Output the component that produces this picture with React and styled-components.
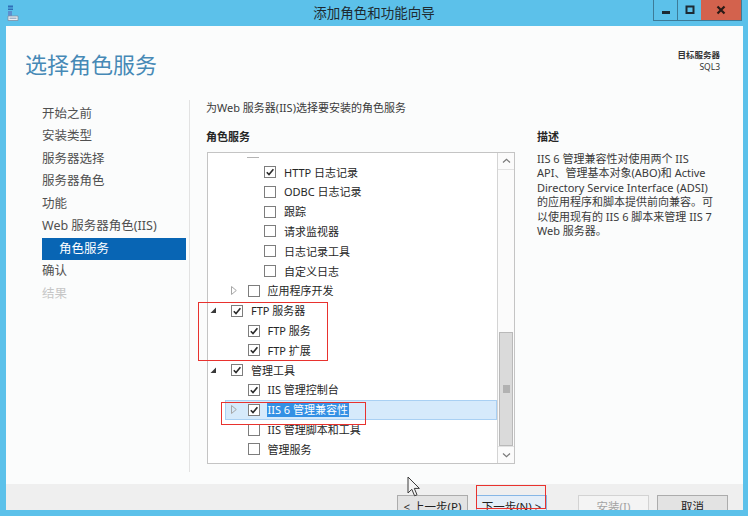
import React from 'react';
import styled, { createGlobalStyle } from 'styled-components';

const GlobalStyle = createGlobalStyle`
  html, body {
    margin: 0;
    padding: 0;
  }
  body {
    width: 748px;
    height: 516px;
    overflow: hidden;
    font-family: "Noto Sans", "Noto Sans CJK SC", sans-serif;
    color: #333;
  }
`;

const NAV = [
  { label: '开始之前' },
  { label: '安装类型' },
  { label: '服务器选择' },
  { label: '服务器角色' },
  { label: '功能' },
  { label: 'Web 服务器角色(IIS)' },
  { label: '角色服务', active: true },
  { label: '确认' },
  { label: '结果', disabled: true },
];

// expander: 'open' | 'closed' | undefined
const TREE = [
  { level: 3, checked: true, label: 'HTTP 日志记录' },
  { level: 3, label: 'ODBC 日志记录' },
  { level: 3, label: '跟踪' },
  { level: 3, label: '请求监视器' },
  { level: 3, label: '日志记录工具' },
  { level: 3, label: '自定义日志' },
  { level: 2, expander: 'closed', label: '应用程序开发' },
  { level: 1, expander: 'open', checked: true, label: 'FTP 服务器' },
  { level: 2, checked: true, label: 'FTP 服务' },
  { level: 2, checked: true, label: 'FTP 扩展' },
  { level: 1, expander: 'open', checked: true, label: '管理工具' },
  { level: 2, checked: true, label: 'IIS 管理控制台' },
  { level: 2, expander: 'closed', checked: true, selected: true, label: 'IIS 6 管理兼容性' },
  { level: 2, label: 'IIS 管理脚本和工具' },
  { level: 2, label: '管理服务' },
];

const App = () => {
  return (
    <>
      <GlobalStyle />
      <Window>
        <TitleBar>
          <AppIcon viewBox="0 0 12 17">
            <rect x="1" y="0.5" width="5" height="2" fill="#2f6fb8" />
            <rect x="1" y="3.5" width="5" height="1.5" fill="#2f6fb8" />
            <rect x="1" y="6" width="4" height="5" fill="#5b8fd0" />
            <path d="M1 11 L11 11 L11 15.5 L1 15.5 Z" fill="#e8eef4" stroke="#7c8fa4" strokeWidth="0.8" />
            <rect x="2.5" y="12.5" width="7" height="1.5" fill="#9fb3c8" />
          </AppIcon>
          <Title>添加角色和功能向导</Title>
          <Controls>
            <CtrlButton>
              <svg width="10" height="10" viewBox="0 0 10 10">
                <rect x="1" y="6" width="8" height="3" fill="#1c2a33" />
              </svg>
            </CtrlButton>
            <CtrlButton>
              <svg width="10" height="10" viewBox="0 0 10 10">
                <rect x="1.5" y="1.5" width="7" height="6.5" fill="none" stroke="#1c2a33" strokeWidth="2" />
              </svg>
            </CtrlButton>
            <CtrlButton $close>
              <svg width="10" height="10" viewBox="0 0 10 10">
                <path d="M1.5 1.5 L8.5 8.5 M8.5 1.5 L1.5 8.5" stroke="#2a1a16" strokeWidth="2.2" />
              </svg>
            </CtrlButton>
          </Controls>
        </TitleBar>

        <Client>
          <Header>
            <PageTitle>选择角色服务</PageTitle>
            <Target>
              <TargetLabel>目标服务器</TargetLabel>
              <TargetName>SQL3</TargetName>
            </Target>
          </Header>

          <Main>
            <Nav>
              {NAV.map((item) => (
                <NavItem key={item.label} $active={item.active} $disabled={item.disabled}>
                  {item.label}
                </NavItem>
              ))}
            </Nav>

            <Content>
              <Intro>为Web 服务器(IIS)选择要安装的角色服务</Intro>
              <SectionLabel>角色服务</SectionLabel>
              <SectionLabel>描述</SectionLabel>

              <TreeWrap>
                <TreeBox>
                  <TreeList>
                    <CutRow>
                      <CutDash />
                    </CutRow>
                    {TREE.map((row) => (
                      <Row key={row.label} $level={row.level}>
                        <RowBody $selected={row.selected}>
                          <Expander $open={row.expander === 'open'}>
                            {row.expander === 'open' && (
                              <svg width="7" height="7" viewBox="0 0 7 7">
                                <polygon points="6,0.5 6,6 0.5,6" fill="#3a3a3a" />
                              </svg>
                            )}
                            {row.expander === 'closed' && (
                              <svg width="6" height="9" viewBox="0 0 6 9">
                                <polygon points="0.5,0.5 5.3,4.5 0.5,8.5" fill="none" stroke="#a6a6a6" strokeWidth="1" />
                              </svg>
                            )}
                          </Expander>
                          <Checkbox>
                            {row.checked && (
                              <svg width="10" height="10" viewBox="0 0 10 10">
                                <path d="M1.8 5.2 L4 7.6 L8.4 2.2" fill="none" stroke="#2b2b2b" strokeWidth="1.6" />
                              </svg>
                            )}
                          </Checkbox>
                          <Label $selected={row.selected}>{row.label}</Label>
                        </RowBody>
                      </Row>
                    ))}
                  </TreeList>
                  <Scrollbar>
                    <ScrollButton>
                      <svg width="9" height="6" viewBox="0 0 9 6">
                        <path d="M1 4.5 L4.5 1.2 L8 4.5" fill="none" stroke="#7a7a7a" strokeWidth="1.2" />
                      </svg>
                    </ScrollButton>
                    <ScrollSpace />
                    <Thumb>
                      <svg width="7" height="8" viewBox="0 0 7 8">
                        <path d="M0 1 H7 M0 3 H7 M0 5 H7 M0 7 H7" stroke="#8a8a8a" strokeWidth="1" />
                      </svg>
                    </Thumb>
                    <ScrollButton>
                      <svg width="9" height="6" viewBox="0 0 9 6">
                        <path d="M1 1.5 L4.5 4.8 L8 1.5" fill="none" stroke="#7a7a7a" strokeWidth="1.2" />
                      </svg>
                    </ScrollButton>
                  </Scrollbar>
                </TreeBox>
                <Mark style={{ left: -9, top: 150, width: 130, height: 59 }} />
                <Mark style={{ left: 14, top: 250, width: 145, height: 23 }} />
              </TreeWrap>

              <Description>
                IIS 6 管理兼容性对使用两个 IIS
                <br />
                API、管理基本对象(ABO)和 Active
                <br />
                Directory Service Interface (ADSI)
                <br />
                的应用程序和脚本提供前向兼容。可
                <br />
                以使用现有的 IIS 6 脚本来管理 IIS 7
                <br />
                Web 服务器。
              </Description>
            </Content>
          </Main>

          <Footer>
            <Button>&lt; 上一步(P)</Button>
            <Button $primary $marked>下一步(N) &gt;</Button>
            <Button $disabled>安装(I)</Button>
            <Button>取消</Button>
          </Footer>
        </Client>

        <Cursor width="14" height="22" viewBox="0 0 14 22">
          <path
            d="M1 1 L1 17 L4.8 13.3 L7.6 19.8 L10 18.8 L7.3 12.4 L12.4 12.4 Z"
            fill="#f4f4f4"
            stroke="#3a3a3a"
            strokeWidth="1"
          />
        </Cursor>
      </Window>
    </>
  );
};

const Window = styled.div`
  position: relative;
  width: 748px;
  height: 516px;
  background: #5cc1ea;
  display: flex;
  flex-direction: column;
  overflow: hidden;
`;

const TitleBar = styled.div`
  height: 26px;
  flex-shrink: 0;
  display: grid;
  grid-template-columns: 1fr auto 1fr;
  align-items: start;
`;

const AppIcon = styled.svg`
  width: 12px;
  height: 17px;
  margin: 5px 0 0 7px;
`;

const Title = styled.div`
  font-size: 13.5px;
  line-height: 24px;
  color: #1e2a30;
  font-family: "Noto Sans CJK SC", sans-serif;
`;

const Controls = styled.div`
  justify-self: end;
  display: flex;
  height: 20px;
  margin-right: 6px;
  border: 1px solid #3d7b98;
  border-top: none;
`;

const CtrlButton = styled.div`
  width: ${(p) => (p.$close ? '40px' : '23px')};
  display: flex;
  align-items: center;
  justify-content: center;
  background: ${(p) => (p.$close ? '#d3624d' : 'transparent')};
  border-left: ${(p) => (p.$close ? 'none' : '1px solid #3d7b98')};

  &:first-child {
    border-left: none;
  }
`;

const Client = styled.div`
  flex: 1;
  margin: 0 5px 6px 6px;
  background: #fbfcfc;
  display: flex;
  flex-direction: column;
  min-height: 0;
`;

const Header = styled.div`
  height: 66px;
  flex-shrink: 0;
  display: flex;
  justify-content: space-between;
  align-items: flex-start;
  padding: 0 23px 0 19px;
`;

const PageTitle = styled.h1`
  margin: 22px 0 0;
  font-size: 22px;
  line-height: 30px;
  font-weight: 400;
  color: #4689b6;
  font-family: "Noto Sans CJK SC", sans-serif;
`;

const Target = styled.div`
  margin-top: 23px;
  text-align: right;
  font-size: 8.5px;
  line-height: 12px;
  color: #333;
`;

const TargetLabel = styled.div`
  font-weight: 700;
`;

const TargetName = styled.div``;

const Main = styled.div`
  flex: 1;
  display: flex;
  min-height: 0;
`;

const Nav = styled.nav`
  width: 144px;
  flex-shrink: 0;
  margin: 8px 0 12px;
  padding: 2.75px 3px 0 36px;
  border-right: 1px solid #e2e2e2;
  display: flex;
  flex-direction: column;
`;

const NavItem = styled.div`
  height: 22.5px;
  line-height: 22.5px;
  font-size: 12.5px;
  white-space: nowrap;
  color: ${(p) => (p.$active ? '#fff' : p.$disabled ? '#c6c6c6' : '#505050')};
  background: ${(p) => (p.$active ? '#0865b4' : 'transparent')};
  padding-left: ${(p) => (p.$active ? '17px' : '0')};
`;

const Content = styled.div`
  flex: 1;
  padding: 0 0 0 16px;
  display: grid;
  grid-template-columns: 309px 1fr;
  grid-template-rows: auto auto 1fr;
  column-gap: 22px;
  align-content: start;
`;

const Intro = styled.div`
  grid-column: 1 / -1;
  margin-top: 7.5px;
  font-size: 11px;
  line-height: 15px;
  color: #3a3a3a;
`;

const SectionLabel = styled.div`
  margin-top: 14.5px;
  margin-bottom: 7.5px;
  font-size: 11px;
  line-height: 15px;
  font-weight: 700;
  color: #262626;
`;

const TreeWrap = styled.div`
  position: relative;
  margin-left: 1px;
`;

const TreeBox = styled.div`
  height: 312px;
  box-sizing: border-box;
  border: 1px solid #c4c4c4;
  background: #fff;
  display: flex;
  overflow: hidden;
`;

const TreeList = styled.div`
  flex: 1;
  display: flex;
  flex-direction: column;
`;

const CutRow = styled.div`
  height: 9.6px;
  padding-left: 39px;
`;

const CutDash = styled.div`
  width: 12px;
  height: 1px;
  margin-top: 4.5px;
  background: #b4b4b4;
`;

const Row = styled.div`
  height: 19.82px;
  flex-shrink: 0;
  display: flex;
  padding-left: ${(p) => (p.$level - 1) * 16.5}px;
`;

const RowBody = styled.div`
  flex: 1;
  display: flex;
  align-items: center;
  box-sizing: border-box;
  border: 1px solid ${(p) => (p.$selected ? '#a9d0f3' : 'transparent')};
  background: ${(p) => (p.$selected ? '#d6eafb' : 'transparent')};
`;

const Expander = styled.div`
  width: 22px;
  flex-shrink: 0;
  display: flex;
  align-items: center;
  padding-left: ${(p) => (p.$open ? '1px' : '5px')};
  box-sizing: border-box;
`;

const Checkbox = styled.div`
  width: 12px;
  height: 12px;
  flex-shrink: 0;
  box-sizing: border-box;
  border: 1px solid #7d7d7d;
  background: #fff;
  display: flex;
  align-items: center;
  justify-content: center;
`;

const Label = styled.span`
  margin-left: 7px;
  font-size: 11px;
  line-height: 15px;
  white-space: nowrap;
  color: ${(p) => (p.$selected ? '#fff' : '#262626')};
  background: ${(p) => (p.$selected ? '#3490e4' : 'transparent')};
  padding: 0 1px;
`;

const Scrollbar = styled.div`
  width: 17px;
  flex-shrink: 0;
  box-sizing: border-box;
  border-left: 1px solid #d4d4d4;
  background: #fbfbfb;
  display: flex;
  flex-direction: column;
`;

const ScrollButton = styled.div`
  height: 16px;
  display: flex;
  align-items: center;
  justify-content: center;
  border-bottom: 1px solid #e2e2e2;

  &:last-child {
    border-bottom: none;
    border-top: 1px solid #e2e2e2;
  }
`;

const ScrollSpace = styled.div`
  flex: 1;
`;

const Thumb = styled.div`
  height: 114px;
  box-sizing: border-box;
  margin: 0 1px;
  border: 1px solid #b9b9b9;
  background: #dadada;
  display: flex;
  align-items: center;
  justify-content: center;
`;

const Mark = styled.div`
  position: absolute;
  box-sizing: border-box;
  border: 1px solid #e8322e;
  pointer-events: none;
`;

const Description = styled.div`
  font-size: 11px;
  line-height: 14.5px;
  color: #3a3a3a;
  white-space: nowrap;
`;

const Footer = styled.div`
  height: 26px;
  flex-shrink: 0;
  background: #efefef;
  display: flex;
  justify-content: flex-end;
  align-items: flex-start;
  padding: 11px 15px 0 0;
  box-sizing: border-box;
  overflow: hidden;
  gap: 8px;
`;

const Button = styled.div`
  position: relative;
  width: 71px;
  height: 23px;
  flex-shrink: 0;
  box-sizing: border-box;
  border: 1px solid ${(p) => (p.$primary ? '#86b7e6' : p.$disabled ? '#d3d3d3' : '#acacac')};
  background: ${(p) => (p.$primary ? '#e4eef8' : p.$disabled ? '#f4f4f4' : '#e3e3e3')};
  color: ${(p) => (p.$disabled ? '#a3a3a3' : '#222')};
  font-size: 11.5px;
  line-height: 21px;
  text-align: center;
  white-space: nowrap;

  &:nth-child(3) {
    margin-left: 23px;
  }

  &::after {
    content: ${(p) => (p.$marked ? '""' : 'none')};
    position: absolute;
    left: -1px;
    top: -11px;
    width: 70px;
    height: 24px;
    box-sizing: border-box;
    border: 1px solid #e8322e;
  }
`;

const Cursor = styled.svg`
  position: absolute;
  left: 407px;
  top: 476px;
  pointer-events: none;
`;

export default App;
